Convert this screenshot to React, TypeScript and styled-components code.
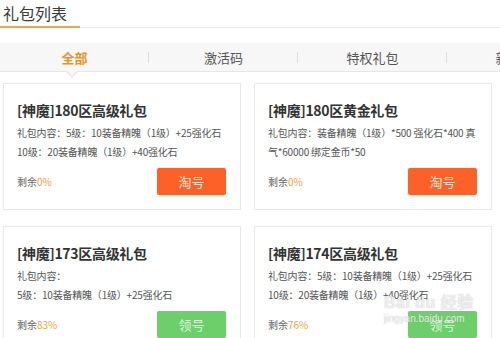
import React from "react";
import styled, { createGlobalStyle } from "styled-components";

const Global = createGlobalStyle`
  html, body { margin: 0; padding: 0; background: #fff; }
  body { width: 500px; height: 338px; overflow: hidden; font-family: "Noto Sans CJK SC", "Noto Sans", sans-serif; }
`;

const Page = styled.div`
  width: 500px;
  height: 338px;
  position: relative;
  overflow: hidden;
`;

const Header = styled.div`
  display: flex;
  border-bottom: 1px solid #e8e8e8;
`;

const HeaderTitle = styled.div`
  font-size: 16px;
  line-height: 26px;
  height: 26px;
  color: #3a3a3a;
  padding: 0 13px 0 3px;
  border-bottom: 2px solid #e9a64a;
  margin-bottom: -1px;
`;

const Tabs = styled.div`
  position: relative;
  margin-top: 15px;
  display: flex;
  height: 28px;
  background: #f7f7f7;
  border-bottom: 1px solid #e6e6e6;
`;

const Tab = styled.div<{ $active?: boolean; $last?: boolean }>`
  position: relative;
  flex: 0 0 149px;
  display: flex;
  align-items: center;
  justify-content: center;
  font-size: 13px;
  white-space: nowrap;
  color: ${(p) => (p.$active ? "#e8922a" : "#555")};
  font-weight: ${(p) => (p.$active ? 700 : 400)};
  &::after {
    content: "";
    display: ${(p) => (p.$last ? "none" : "block")};
    position: absolute;
    right: 0;
    top: 9px;
    height: 11px;
    width: 1px;
    background: #dcdcdc;
  }
`;

const Caret = styled.div`
  position: absolute;
  left: 66px;
  bottom: -7px;
  width: 0;
  height: 0;
  border-left: 6px solid transparent;
  border-right: 6px solid transparent;
  border-top: 6px solid #e6e6e6;
  &::after {
    content: "";
    position: absolute;
    left: -5px;
    top: -7px;
    border-left: 5px solid transparent;
    border-right: 5px solid transparent;
    border-top: 5px solid #f7f7f7;
  }
`;

const Grid = styled.div`
  display: grid;
  grid-template-columns: 238px 238px;
  column-gap: 13px;
  row-gap: 16px;
  margin: 11px 0 0 3px;
`;

const Card = styled.div`
  border: 1px solid #e8e8e8;
  background: #fff;
  padding: 16px 14px 14px 13px;
  box-shadow: 0 0 2px rgba(0, 0, 0, 0.03);
`;

const CardTitle = styled.div`
  font-size: 14px;
  line-height: 20px;
  font-weight: 700;
  color: #333;
  letter-spacing: -0.3px;
`;

const Content = styled.div`
  margin-top: 3px;
`;

const Line = styled.div`
  font-size: 10px;
  line-height: 19px;
  height: 19px;
  color: #555;
  white-space: nowrap;
  letter-spacing: -0.2px;
`;

const Footer = styled.div`
  margin-top: 7px;
  display: flex;
  align-items: center;
  justify-content: space-between;
`;

const Remain = styled.div`
  font-size: 10px;
  color: #666;
`;

const Pct = styled.span`
  color: #eba23a;
`;

const Btn = styled.div<{ $kind: "tao" | "ling" }>`
  width: 69px;
  height: 27px;
  border-radius: 2px;
  display: flex;
  align-items: center;
  justify-content: center;
  font-size: 13px;
  background: ${(p) => (p.$kind === "tao" ? "#fd6128" : "#6ccf6a")};
  color: ${(p) => (p.$kind === "tao" ? "#ffe1d4" : "#dff6df")};
`;

const Watermark = styled.div`
  position: absolute;
  left: 384px;
  top: 295px;
  color: rgba(255, 255, 255, 0.8);
  text-shadow: 0 0 1px rgba(140, 140, 140, 0.7);
  font-family: "Liberation Sans", "Noto Sans CJK SC", sans-serif;
  line-height: 1;
  white-space: nowrap;
  pointer-events: none;
`;

const WmTop = styled.div`
  font-size: 16px;
  font-weight: 700;
  letter-spacing: 0.5px;
`;

const WmBottom = styled.div`
  margin-top: 3px;
  font-size: 10px;
`;

type Gift = { title: string; lines: string[]; pct: string; kind: "tao" | "ling" };

const gifts: Gift[] = [
  {
    title: "[神魔]180区高级礼包",
    lines: ["礼包内容：5级：10装备精魄（1级）+25强化石", "10级：20装备精魄（1级）+40强化石"],
    pct: "0%",
    kind: "tao",
  },
  {
    title: "[神魔]180区黄金礼包",
    lines: ["礼包内容：装备精魄（1级）*500 强化石*400 真", "气*60000 绑定金币*50"],
    pct: "0%",
    kind: "tao",
  },
  {
    title: "[神魔]173区高级礼包",
    lines: ["礼包内容：", "5级：10装备精魄（1级）+25强化石"],
    pct: "83%",
    kind: "ling",
  },
  {
    title: "[神魔]174区高级礼包",
    lines: ["礼包内容：5级：10装备精魄（1级）+25强化石", "10级：20装备精魄（1级）+40强化石"],
    pct: "76%",
    kind: "ling",
  },
];

export default function App() {
  return (
    <Page>
      <Global />
      <Header>
        <HeaderTitle>礼包列表</HeaderTitle>
      </Header>
      <Tabs>
        <Tab $active>全部</Tab>
        <Tab>激活码</Tab>
        <Tab>特权礼包</Tab>
        <Tab $last>新手礼包</Tab>
        <Caret />
      </Tabs>
      <Grid>
        {gifts.map((g, i) => (
          <Card key={i}>
            <CardTitle>{g.title}</CardTitle>
            <Content>
              {g.lines.map((l, j) => (
                <Line key={j}>{l}</Line>
              ))}
            </Content>
            <Footer>
              <Remain>
                剩余<Pct>{g.pct}</Pct>
              </Remain>
              <Btn $kind={g.kind}>{g.kind === "tao" ? "淘号" : "领号"}</Btn>
            </Footer>
          </Card>
        ))}
      </Grid>
      <Watermark>
        <WmTop>Bai du 经验</WmTop>
        <WmBottom>jingyan.baidu.com</WmBottom>
      </Watermark>
    </Page>
  );
}
